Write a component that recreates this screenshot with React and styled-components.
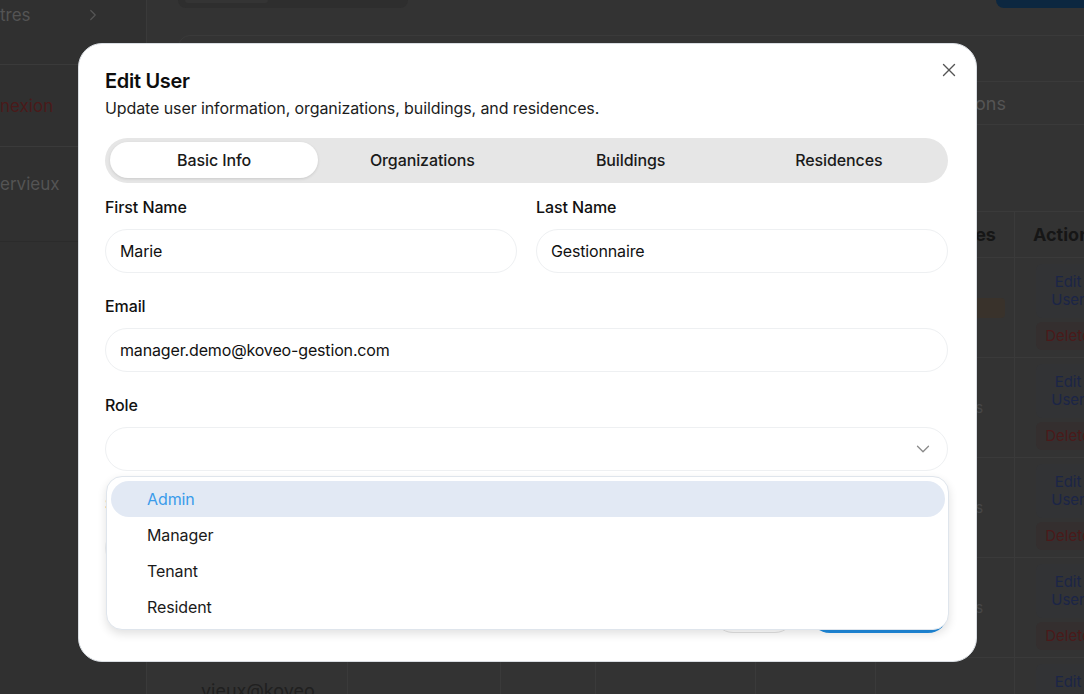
import React from "react";
import styled, { createGlobalStyle } from "styled-components";
import { X, ChevronDown, ChevronRight } from "lucide-react";

const GlobalStyle = createGlobalStyle`
  * { box-sizing: border-box; }
  html, body {
    margin: 0;
    height: 100%;
    overflow: hidden;
    background: #333333;
    font-family: Inter, "Noto Sans", sans-serif;
  }
`;

const columns = [172, 153, 95, 160, 120, 139, 140];

const rows = [
  { res: "badge" },
  { res: "2 residences" },
  { res: "2 residences" },
  { res: "2 residences" },
];

function App() {
  return (
    <>
      <GlobalStyle />
      <Page>
        <Sidebar>
          <NavItem $h={65} $pad={4} $align="flex-start">
            <span>tres</span>
            <ChevronRight size={18} strokeWidth={1.6} />
          </NavItem>
          <NavItem $h={82} $danger>
            <span>nexion</span>
          </NavItem>
          <NavItem $h={95} $pad={26} $align="flex-start" $last>
            <span>ervieux</span>
          </NavItem>
        </Sidebar>

        <Main>
          <TopBar>
            <TabList>
              <TabStub />
            </TabList>
            <AddButton />
          </TopBar>

          <Card>
            <CardRow $h={45} />
            <CardRow $h={43}>
              <CardText>Organizations</CardText>
            </CardRow>
          </Card>

          <Table>
            <HeadRow>
              {columns.map((w, i) => (
                <HeadCell key={i} style={{ width: w }}>
                  {i === 5 ? "Residences" : i === 6 ? "Actions" : ""}
                </HeadCell>
              ))}
            </HeadRow>
            {rows.map((r, ri) => (
              <BodyRow key={ri}>
                {columns.map((w, i) => (
                  <BodyCell key={i} style={{ width: w }}>
                    {i === 5 && r.res === "badge" && <Badge>Résidence 101</Badge>}
                    {i === 5 && r.res !== "badge" && <Muted>{r.res}</Muted>}
                    {i === 6 && (
                      <Actions>
                        <EditLink>Edit User</EditLink>
                        <DeleteLink>Delete</DeleteLink>
                      </Actions>
                    )}
                  </BodyCell>
                ))}
              </BodyRow>
            ))}
            <BodyRow>
              {columns.map((w, i) => (
                <BodyCell key={i} style={{ width: w }}>
                  {i === 0 && <EmailText>vieux@koveo-gestion.com</EmailText>}
                  {i === 6 && (
                    <Actions>
                      <EditLink>Edit User</EditLink>
                    </Actions>
                  )}
                </BodyCell>
              ))}
            </BodyRow>
          </Table>
        </Main>
      </Page>

      <Dialog>
        <CloseButton>
          <X size={22} strokeWidth={1.5} />
        </CloseButton>
        <Title>Edit User</Title>
        <Description>
          Update user information, organizations, buildings, and residences.
        </Description>

        <Tabs>
          <Tab $active>Basic Info</Tab>
          <Tab>Organizations</Tab>
          <Tab>Buildings</Tab>
          <Tab>Residences</Tab>
        </Tabs>

        <Form>
          <TwoCols>
            <Field>
              <Label>First Name</Label>
              <Input defaultValue="Marie" />
            </Field>
            <Field>
              <Label>Last Name</Label>
              <Input defaultValue="Gestionnaire" />
            </Field>
          </TwoCols>
          <Field>
            <Label>Email</Label>
            <Input defaultValue="manager.demo@koveo-gestion.com" />
          </Field>
          <Field>
            <Label>Role</Label>
            <SelectWrap>
              <SelectTrigger>
                <ChevronDown size={22} strokeWidth={1.4} />
              </SelectTrigger>
              <Menu>
                <MenuItem $active>Admin</MenuItem>
                <MenuItem>Manager</MenuItem>
                <MenuItem>Tenant</MenuItem>
                <MenuItem>Resident</MenuItem>
              </Menu>
            </SelectWrap>
          </Field>
          <Field>
            <Label>Status</Label>
            <Input />
          </Field>
        </Form>

        <Footer>
          <CancelButton>Cancel</CancelButton>
          <SaveButton>Update User</SaveButton>
        </Footer>
      </Dialog>
    </>
  );
}

export default App;

/* ---------- background page ---------- */

const Page = styled.div`
  display: flex;
  width: 1084px;
  height: 694px;
  overflow: hidden;
`;

const Sidebar = styled.aside`
  flex: 0 0 147px;
  background: #303030;
  border-right: 1px solid #3a3a3a;
`;

const NavItem = styled.div`
  height: ${(p) => p.$h}px;
  display: flex;
  align-items: ${(p) => p.$align || "center"};
  justify-content: space-between;
  padding: ${(p) => p.$pad || 0}px 44px 0 0;
  border-bottom: ${(p) => (p.$last ? "1px solid #2b2b2b" : "1px solid #3a3a3a")};
  font-size: 17px;
  line-height: 22px;
  color: ${(p) => (p.$danger ? "#4a1a1a" : "#545454")};

  svg {
    color: #555;
    margin-top: 2px;
  }
`;

const Main = styled.main`
  flex: 1;
  min-width: 0;
  padding-left: 28px;
`;

const TopBar = styled.div`
  height: 35px;
  display: flex;
  justify-content: space-between;
  align-items: flex-start;
  margin-right: -40px;
`;

const TabList = styled.div`
  width: 230px;
  height: 8px;
  margin-left: 3px;
  background: #2e2e2e;
  border-radius: 0 0 10px 10px;
  padding-left: 7px;
`;

const TabStub = styled.div`
  width: 83px;
  height: 3px;
  background: #343434;
  border-radius: 0 0 8px 8px;
`;

const AddButton = styled.div`
  width: 128px;
  height: 8px;
  background: #0c2740;
  border-radius: 0 0 12px 12px;
`;

const Card = styled.div`
  margin-left: 3px;
  margin-right: -40px;
  border: 1px solid #3a3a3a;
  border-radius: 12px;
`;

const CardRow = styled.div`
  height: ${(p) => p.$h}px;
  display: flex;
  align-items: center;
  justify-content: flex-end;
  padding-right: 117px;
  & + & {
    border-top: 1px solid #3a3a3a;
  }
`;

const CardText = styled.span`
  font-size: 18px;
  color: #555;
`;

const Table = styled.div`
  margin-top: 86px;
  width: 979px;
  border-top: 1px solid #3a3a3a;
`;

const HeadRow = styled.div`
  display: flex;
  height: 46px;
  border-bottom: 1px solid #3a3a3a;
`;

const HeadCell = styled.div`
  flex: none;
  display: flex;
  align-items: center;
  padding: 0 18px;
  font-size: 18px;
  font-weight: 700;
  color: #161616;
  white-space: nowrap;
  overflow: hidden;
  & + & {
    border-left: 1px solid #3a3a3a;
  }
`;

const BodyRow = styled.div`
  display: flex;
  height: 100px;
  border-bottom: 1px solid #3a3a3a;
`;

const BodyCell = styled.div`
  flex: none;
  display: flex;
  align-items: center;
  padding: 0 16px;
  overflow: hidden;
  & + & {
    border-left: 1px solid #3a3a3a;
  }
  &:first-child {
    align-items: flex-start;
    padding: 22px 26px 0;
  }
  &:last-child {
    align-items: flex-start;
    padding: 6px 0 0 21px;
  }
`;

const Badge = styled.span`
  padding: 3px 10px;
  border-radius: 4px;
  background: #39322b;
  color: #39322b;
  font-size: 14px;
  line-height: 14px;
  white-space: nowrap;
`;

const Muted = styled.span`
  font-size: 15px;
  color: #474747;
  white-space: nowrap;
`;

const EmailText = styled.span`
  font-size: 18px;
  color: #202020;
  word-break: break-all;
`;

const Actions = styled.div`
  display: flex;
  flex-direction: column;
  gap: 4px;
`;

const EditLink = styled.div`
  width: 64px;
  padding: 9px 7px;
  text-align: center;
  font-size: 15px;
  line-height: 18px;
  color: #1b2547;
  background: #323335;
  border-radius: 6px;
`;

const DeleteLink = styled(EditLink)`
  padding: 5px 7px;
  color: #4a1a1a;
  background: #342f2f;
  white-space: nowrap;
`;

/* ---------- dialog ---------- */

const Dialog = styled.div`
  position: fixed;
  left: 78px;
  top: 43px;
  width: 899px;
  background: #ffffff;
  border: 1px solid #d9dde2;
  border-radius: 24px;
  padding: 23px 28px 28px 26px;
  color: #0d0d0d;
  letter-spacing: -0.1px;
`;

const CloseButton = styled.button`
  position: absolute;
  top: 15px;
  right: 16px;
  width: 22px;
  height: 22px;
  padding: 0;
  border: 0;
  background: none;
  color: #555;
  display: flex;
  align-items: center;
  justify-content: center;
`;

const Title = styled.h2`
  margin: 0;
  font-size: 20px;
  line-height: 28px;
  font-weight: 600;
  letter-spacing: -0.3px;
`;

const Description = styled.p`
  margin: 1px 0 0;
  font-size: 16px;
  line-height: 24px;
  color: #1c1c1c;
`;

const Tabs = styled.div`
  margin-top: 18px;
  height: 45px;
  padding: 4px 5px 5px;
  display: grid;
  grid-template-columns: repeat(4, 1fr);
  background: #e6e6e6;
  border-radius: 9999px;
`;

const Tab = styled.div`
  display: flex;
  align-items: center;
  justify-content: center;
  border-radius: 9999px;
  font-size: 16px;
  font-weight: 500;
  color: #1a1a1a;
  background: ${(p) => (p.$active ? "#ffffff" : "transparent")};
  box-shadow: ${(p) => (p.$active ? "0 1px 3px rgba(0,0,0,0.12)" : "none")};
`;

const Form = styled.div`
  margin-top: 12px;
  display: flex;
  flex-direction: column;
  gap: 21px;
`;

const TwoCols = styled.div`
  display: grid;
  grid-template-columns: 1fr 1fr;
  gap: 19px;
`;

const Field = styled.div`
  display: flex;
  flex-direction: column;
  gap: 10px;
`;

const Label = styled.label`
  font-size: 16px;
  line-height: 24px;
  font-weight: 500;
  color: #111;
`;

const Input = styled.input`
  height: 44px;
  width: 100%;
  padding: 0 14px;
  border: 1px solid #eef0f2;
  border-radius: 9999px;
  font-family: inherit;
  font-size: 16px;
  letter-spacing: -0.15px;
  color: #111;
  background: #fff;
  outline: none;
`;

const SelectWrap = styled.div`
  position: relative;
`;

const SelectTrigger = styled.div`
  height: 44px;
  display: flex;
  align-items: center;
  justify-content: flex-end;
  padding-right: 13px;
  border: 1px solid #eef0f2;
  border-radius: 9999px;
  color: #8a8a8a;
`;

const Menu = styled.div`
  position: absolute;
  top: calc(100% + 5px);
  left: 1px;
  right: -1px;
  padding: 4px 3px 4px 4px;
  background: #ffffff;
  border: 1px solid #dfe5ec;
  border-radius: 16px;
  box-shadow: 0 4px 10px rgba(0, 0, 0, 0.12);
  z-index: 2;
`;

const MenuItem = styled.div`
  height: 36px;
  display: flex;
  align-items: center;
  padding-left: 36px;
  border-radius: 9999px;
  font-size: 16px;
  color: ${(p) => (p.$active ? "#3a9bea" : "#1a1a1a")};
  background: ${(p) => (p.$active ? "#e2e9f4" : "transparent")};
`;

const Footer = styled.div`
  margin-top: 23px;
  display: flex;
  justify-content: flex-end;
  gap: 15px;
`;

const CancelButton = styled.button`
  height: 40px;
  width: 82px;
  border: 1px solid #e2e2e2;
  border-radius: 9999px;
  background: #fff;
  font-family: inherit;
  font-size: 15px;
  color: #111;
`;

const SaveButton = styled(CancelButton)`
  width: 138px;
  border: 0;
  background: #1f8ce0;
  color: #fff;
`;
